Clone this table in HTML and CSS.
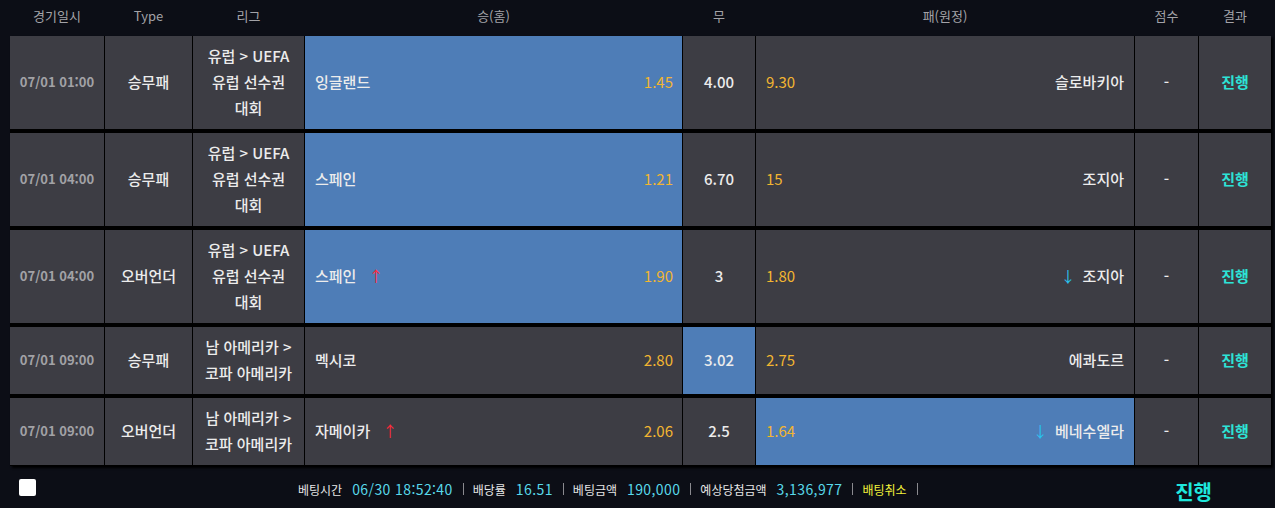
FILE: index.html
```html
<!DOCTYPE html>
<html lang="ko">
<head>
    <meta charset="UTF-8">
    <title>베팅내역</title>
    <link rel="stylesheet" href="styles.css">
</head>
<body>

    <div class="head-row">
        <div>경기일시</div>
        <div>Type</div>
        <div>리그</div>
        <div>승(홈)</div>
        <div>무</div>
        <div>패(원정)</div>
        <div>점수</div>
        <div>결과</div>
    </div>

    <div class="bet-table">
        <div class="bet-row">
            <div class="cell date">07/01 01:00</div>
            <div class="cell">승무패</div>
            <div class="cell">유럽 &gt; UEFA<br>유럽 선수권<br>대회</div>
            <div class="cell home picked"><span class="team">잉글랜드</span><span class="odds">1.45</span></div>
            <div class="cell draw">4.00</div>
            <div class="cell away"><span class="odds">9.30</span><span class="team">슬로바키아</span></div>
            <div class="cell">-</div>
            <div class="cell result">진행</div>
        </div>
        <div class="bet-row">
            <div class="cell date">07/01 04:00</div>
            <div class="cell">승무패</div>
            <div class="cell">유럽 &gt; UEFA<br>유럽 선수권<br>대회</div>
            <div class="cell home picked"><span class="team">스페인</span><span class="odds">1.21</span></div>
            <div class="cell draw">6.70</div>
            <div class="cell away"><span class="odds">15</span><span class="team">조지아</span></div>
            <div class="cell">-</div>
            <div class="cell result">진행</div>
        </div>
        <div class="bet-row">
            <div class="cell date">07/01 04:00</div>
            <div class="cell">오버언더</div>
            <div class="cell">유럽 &gt; UEFA<br>유럽 선수권<br>대회</div>
            <div class="cell home picked"><span class="team">스페인 <i class="up">↑</i></span><span class="odds">1.90</span></div>
            <div class="cell draw">3</div>
            <div class="cell away"><span class="odds">1.80</span><span class="team"><i class="down">↓</i> 조지아</span></div>
            <div class="cell">-</div>
            <div class="cell result">진행</div>
        </div>
        <div class="bet-row">
            <div class="cell date">07/01 09:00</div>
            <div class="cell">승무패</div>
            <div class="cell">남 아메리카 &gt;<br>코파 아메리카</div>
            <div class="cell home"><span class="team">멕시코</span><span class="odds">2.80</span></div>
            <div class="cell draw picked">3.02</div>
            <div class="cell away"><span class="odds">2.75</span><span class="team">에콰도르</span></div>
            <div class="cell">-</div>
            <div class="cell result">진행</div>
        </div>
        <div class="bet-row">
            <div class="cell date">07/01 09:00</div>
            <div class="cell">오버언더</div>
            <div class="cell">남 아메리카 &gt;<br>코파 아메리카</div>
            <div class="cell home"><span class="team">자메이카 <i class="up">↑</i></span><span class="odds">2.06</span></div>
            <div class="cell draw">2.5</div>
            <div class="cell away picked"><span class="odds">1.64</span><span class="team"><i class="down">↓</i> 베네수엘라</span></div>
            <div class="cell">-</div>
            <div class="cell result">진행</div>
        </div>
    </div>

    <div class="bet-footer">
        <span class="check-box"></span>
        <div class="bet-info">
            <span class="label">베팅시간</span><span class="value">06/30 18:52:40</span><span class="sep"></span>
            <span class="label">배당률</span><span class="value">16.51</span><span class="sep"></span>
            <span class="label">베팅금액</span><span class="value">190,000</span><span class="sep"></span>
            <span class="label">예상당첨금액</span><span class="value">3,136,977</span><span class="sep"></span>
            <span class="cancel">배팅취소</span><span class="sep"></span>
        </div>
        <div class="bet-state">진행</div>
    </div>

</body>
</html>
```

FILE: styles.css
```css
body {
    margin: 0;
    background-color: #0c0e16;
    font-family: "Noto Sans CJK KR", "Noto Sans", sans-serif;
    color: #ececec;
    width: 1275px;
    height: 508px;
    overflow: hidden;
}

.head-row,
.bet-row {
    display: grid;
    grid-template-columns: 94px 87px 111px 377px 72px 378px 63px 72px;
    column-gap: 1px;
}

.head-row {
    height: 36px;
    margin-left: 10px;
    padding-bottom: 5px;
    box-sizing: border-box;
    align-items: center;
    text-align: center;
    font-size: 13px;
    color: #a3a3a8;
}

.bet-table {
    display: flex;
    flex-direction: column;
    gap: 4px;
    margin-left: 10px;
    width: 1261px;
    background-color: #000;
    padding-bottom: 1px;
    box-shadow: 2px 2px 2px #000;
}

.bet-row {
    background-color: #000;
}

.cell {
    display: flex;
    align-items: center;
    justify-content: center;
    text-align: center;
    background-color: #3d3d44;
    padding: 7px 0 8px;
    line-height: 26px;
    font-size: 15px;
    font-weight: 500;
}

.cell.date {
    font-size: 13px;
    font-weight: 700;
    color: #a2a2a6;
}

.cell.picked {
    background-color: #4e7db7;
}

.cell.home,
.cell.away {
    justify-content: space-between;
    padding-left: 10px;
    padding-right: 10px;
}

.cell.home {
    padding-right: 9px;
}

.odds {
    color: #f2b531;
    font-weight: 400;
}

.team i {
    font-style: normal;
    font-weight: 400;
}

.up {
    color: #ff2a3a;
    margin-left: 8px;
}

.down {
    color: #29c4f0;
    margin-right: 3px;
}

.result {
    color: #2de3d6;
    font-weight: 700;
}

/* 하단 베팅 정보 */
.bet-footer {
    display: flex;
    align-items: center;
    height: 42px;
    padding-left: 19px;
}

.check-box {
    width: 17px;
    height: 17px;
    background-color: #fff;
    border-radius: 2px;
    margin-right: 262px;
}

.bet-info {
    display: flex;
    align-items: center;
    font-size: 12px;
    padding-top: 4px;
}

.label {
    color: #e6e6e6;
    margin-right: 10px;
}

.value {
    color: #58d9ea;
    font-size: 14px;
    letter-spacing: 0.4px;
}

.cancel {
    color: #f3f23a;
}

.sep {
    width: 1px;
    height: 12px;
    background-color: #8a8a8f;
    margin: 0 9px 0 10px;
}

.bet-state {
    margin-left: auto;
    margin-right: 63px;
    font-size: 20px;
    font-weight: 700;
    color: #1fe6dc;
    padding-top: 8px;
}
```
